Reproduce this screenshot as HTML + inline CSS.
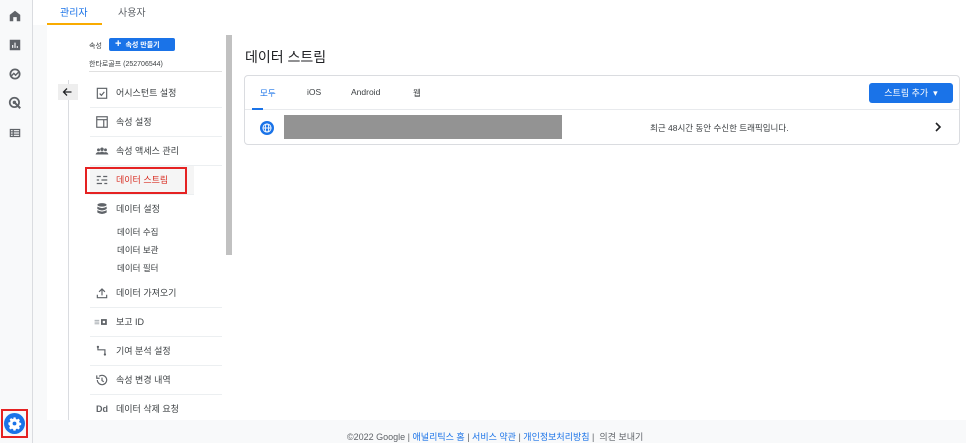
<html><head><style>
body{margin:0;width:966px;height:443px;position:relative;overflow:hidden;background:#fff;font-family:"Liberation Sans","Noto Sans CJK KR",sans-serif;color:#3c4043}
.a{position:absolute}
.rail{left:0;top:0;width:32px;height:443px;background:#f8f9fa;border-right:1px solid #dadce0}
.ic{left:8px;width:14px;height:14px}
.mi{position:absolute;left:90px;width:132px;height:28px;border-bottom:1px solid #eceff1;font-size:9px;line-height:28px}
.mi span{position:absolute;left:26px}
.mi svg{position:absolute;left:5px;top:7px;width:14px;height:14px}
.sub{position:absolute;left:117px;font-size:8.5px}
</style></head><body>
<div class="a rail"></div>
<svg class="a ic" style="top:9px" viewBox="0 0 24 24"><path fill="#5f6368" d="M12 3L3 10v11h6v-7h6v7h6V10z"/></svg>
<svg class="a ic" style="top:38px" viewBox="0 0 24 24"><path fill="#5f6368" d="M3 3h18v18H3zM7 12v5h2v-5zm4-4v9h2V8zm4 6v3h2v-3z"/></svg>
<svg class="a ic" style="top:67px" viewBox="0 0 24 24"><circle cx="12" cy="12" r="8" fill="none" stroke="#5f6368" stroke-width="3"/><path d="M6 15l4-4 3 3 5-5" fill="none" stroke="#5f6368" stroke-width="2.5"/></svg>
<svg class="a ic" style="top:96px" viewBox="0 0 24 24"><circle cx="11" cy="11" r="8" fill="none" stroke="#5f6368" stroke-width="3"/><circle cx="11" cy="11" r="3" fill="#5f6368"/><path d="M13 13l8 8" stroke="#5f6368" stroke-width="3.5"/></svg>
<svg class="a ic" style="top:126px" viewBox="0 0 24 24"><path fill="#5f6368" d="M3 5h18v14H3zM5 7v2h3V7zm5 0v2h9V7zM5 11v2h3v-2zm5 0v2h9v-2zM5 15v2h3v-2zm5 0v2h9v-2z"/></svg>
<div class="a" style="left:1px;top:409px;width:27px;height:29px;border:2px solid #e52222;box-sizing:border-box"></div>
<svg class="a" style="left:4px;top:413px;width:21px;height:21px" viewBox="0 0 24 24"><circle cx="12" cy="12" r="12" fill="#1a73e8"/><path fill="#fff" d="M10.8 5h2.4l.4 1.8 1.3.6 1.6-1 1.7 1.7-1 1.6.6 1.3 1.8.4v2.4l-1.8.4-.6 1.3 1 1.6-1.7 1.7-1.6-1-1.3.6-.4 1.8h-2.4l-.4-1.8-1.3-.6-1.6 1-1.7-1.7 1-1.6-.6-1.3L5 13.2v-2.4l1.8-.4.6-1.3-1-1.6 1.7-1.7 1.6 1 1.3-.6z"/><circle cx="12" cy="12" r="2.2" fill="#1a73e8"/></svg>
<div class="a" style="left:33px;top:25px;width:14px;height:395px;background:#f8f9fa"></div>
<div class="a" style="left:60px;top:4px;font-size:10px;color:#1a73e8">관리자</div>
<div class="a" style="left:47px;top:23px;width:55px;height:2px;background:#f9ab00"></div>
<div class="a" style="left:118px;top:4px;font-size:10px;color:#5f6368">사용자</div>
<div class="a" style="left:89px;top:41px;font-size:7px">속성</div>
<div class="a" style="left:109px;top:38px;width:66px;height:13px;background:#1a73e8;border-radius:2px;color:#fff;font-size:7px;line-height:13px;font-weight:bold"><span style="font-size:11px;margin:0 4px 0 6px">+</span>속성 만들기</div>
<div class="a" style="left:89px;top:59px;font-size:7px">한타로골프 (252706544)</div>
<div class="a" style="left:89px;top:71px;width:133px;border-top:1px solid #e0e0e0"></div>
<div class="a" style="left:68px;top:80px;height:340px;border-left:1px solid #dadce0"></div>
<div class="a" style="left:58px;top:84px;width:20px;height:16px;background:#eeeeee"></div>
<svg class="a" style="left:61px;top:86px;width:13px;height:12px" viewBox="0 0 24 24"><path d="M20 12H5M11 5l-7 7 7 7" fill="none" stroke="#202124" stroke-width="2.5"/></svg>
<div class="a" style="left:226px;top:35px;width:6px;height:220px;background:#c1c1c1"></div>
<div class="mi" style="top:79px"><svg viewBox="0 0 24 24"><rect x="4" y="4" width="16" height="17" fill="none" stroke="#5f6368" stroke-width="2"/><path d="M8 13l3 3 5-6" fill="none" stroke="#5f6368" stroke-width="2"/></svg><span>어시스턴트 설정</span></div>
<div class="mi" style="top:108px"><svg viewBox="0 0 24 24"><rect x="3" y="3" width="18" height="18" fill="none" stroke="#5f6368" stroke-width="2"/><path d="M3 8h18M15 8v13" stroke="#5f6368" stroke-width="2"/></svg><span>속성 설정</span></div>
<div class="mi" style="top:137px"><svg viewBox="0 0 24 24"><circle cx="6" cy="10" r="2.5" fill="#5f6368"/><circle cx="12" cy="9" r="3" fill="#5f6368"/><circle cx="18" cy="10" r="2.5" fill="#5f6368"/><path fill="#5f6368" d="M1 18q1-4 5-4t5 4zm6 0q1-5 5-5t5 5zm6 0q1-4 5-4t5 4z"/></svg><span>속성 액세스 관리</span></div>
<div class="mi" style="top:166px;background:#f5f5f5;width:104px;color:#d93025"><svg viewBox="0 0 24 24"><path d="M3 6h7M14 6h7M3 12h4M11 12h10M3 18h9M16 18h5" stroke="#5f6368" stroke-width="2"/></svg><span>데이터 스트림</span></div>
<div class="a" style="left:85px;top:167px;width:102px;height:27px;border:2px solid #e52222;box-sizing:border-box"></div>
<div class="mi" style="top:195px;border:none"><svg viewBox="0 0 24 24"><ellipse cx="12" cy="5" rx="8" ry="3" fill="#5f6368"/><path fill="#5f6368" d="M4 8q8 5 16 0v4q-8 5-16 0zm0 6q8 5 16 0v4q-8 5-16 0z"/></svg><span>데이터 설정</span></div>
<div class="sub" style="top:226px">데이터 수집</div>
<div class="sub" style="top:244px">데이터 보관</div>
<div class="sub" style="top:262px">데이터 필터</div>
<div class="mi" style="top:279px"><svg viewBox="0 0 24 24"><path d="M12 16V5M7 10l5-5 5 5M4 15v5h16v-5" fill="none" stroke="#5f6368" stroke-width="2"/></svg><span>데이터 가져오기</span></div>
<div class="mi" style="top:308px"><svg viewBox="0 0 24 24" style="width:16px;left:3px"><path d="M1 9h8M1 12h8M1 15h8" stroke="#9aa0a6" stroke-width="1.5"/><rect x="12" y="7" width="10" height="10" fill="#5f6368"/><rect x="15" y="10" width="4" height="4" fill="#fff"/></svg><span>보고 ID</span></div>
<div class="mi" style="top:337px"><svg viewBox="0 0 24 24"><path d="M5 5v5h12v7" fill="none" stroke="#5f6368" stroke-width="2"/><circle cx="5" cy="5" r="2" fill="#5f6368"/><circle cx="17" cy="18" r="2" fill="#5f6368"/></svg><span>기여 분석 설정</span></div>
<div class="mi" style="top:366px"><svg viewBox="0 0 24 24"><path d="M4 12a8 8 0 1 0 3-6.3" fill="none" stroke="#5f6368" stroke-width="2"/><path d="M3 4v5h5" fill="none" stroke="#5f6368" stroke-width="2"/><path d="M12 8v5l3 2" fill="none" stroke="#5f6368" stroke-width="2"/></svg><span>속성 변경 내역</span></div>
<div class="mi" style="top:395px;border:none"><b style="position:absolute;left:6px;font-size:9px;color:#5f6368">Dd</b><span>데이터 삭제 요청</span></div>
<div class="a" style="left:245px;top:47px;font-size:14px;color:#202124">데이터 스트림</div>
<div class="a" style="left:244px;top:75px;width:716px;height:70px;border:1px solid #dadce0;border-radius:4px;box-sizing:border-box"></div>
<div class="a" style="left:245px;top:109px;width:714px;border-top:1px solid #e8eaed"></div>
<div class="a" style="left:260px;top:87px;font-size:8.5px;color:#1a73e8">모두</div>
<div class="a" style="left:252px;top:108px;width:11px;height:2px;background:#1a73e8"></div>
<div class="a" style="left:307px;top:87px;font-size:8.5px">iOS</div>
<div class="a" style="left:351px;top:87px;font-size:8.5px">Android</div>
<div class="a" style="left:413px;top:87px;font-size:8.5px">웹</div>
<div class="a" style="left:869px;top:83px;width:84px;height:20px;background:#1a73e8;border-radius:3px;color:#fff;font-size:9px;line-height:20px;text-align:center">스트림 추가 &nbsp;▾</div>
<svg class="a" style="left:260px;top:121px;width:14px;height:14px" viewBox="0 0 24 24"><circle cx="12" cy="12" r="12" fill="#1a73e8"/><circle cx="12" cy="12" r="7" fill="none" stroke="#fff" stroke-width="1.6"/><ellipse cx="12" cy="12" rx="3" ry="7" fill="none" stroke="#fff" stroke-width="1.6"/><path d="M5 12h14" stroke="#fff" stroke-width="1.6"/></svg>
<div class="a" style="left:284px;top:115px;width:278px;height:24px;background:#939393"></div>
<div class="a" style="left:650px;top:122px;font-size:8.5px">최근 48시간 동안 수신한 트래픽입니다.</div>
<svg class="a" style="left:934px;top:122px;width:8px;height:10px" viewBox="0 0 8 10"><path d="M2 1l4 4-4 4" fill="none" stroke="#202124" stroke-width="1.6"/></svg>
<div class="a" style="left:33px;top:420px;width:933px;height:23px;background:#f8f9fa"></div>
<div class="a" style="left:347px;top:430px;font-size:9px;color:#5f6368">©2022 Google | <span style="color:#1a73e8">애널리틱스 홈</span> | <span style="color:#1a73e8">서비스 약관</span> | <span style="color:#1a73e8">개인정보처리방침</span> | &nbsp;의견 보내기</div>
</body></html>
